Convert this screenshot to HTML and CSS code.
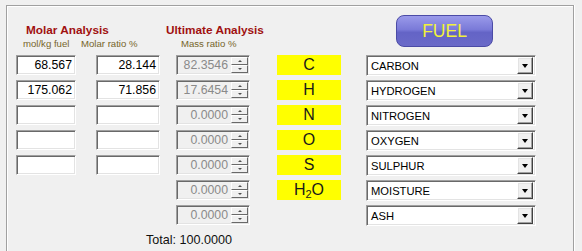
FILE: index.html
```html
<!DOCTYPE html>
<html>
<head>
<meta charset="utf-8">
<link rel="stylesheet" href="styles.css">
</head>
<body>
<div class="frame">
  <div class="header">
    <div class="title title-molar">Molar Analysis</div>
    <div class="title title-ult">Ultimate Analysis</div>
    <div class="sub sub-mol">mol/kg fuel</div>
    <div class="sub sub-ratio">Molar ratio %</div>
    <div class="sub sub-mass">Mass ratio %</div>
    <div class="fuel-btn">FUEL</div>
  </div>
  <div class="grid">
    <div class="field c1"><span>68.567</span></div>
    <div class="field c2"><span>28.144</span></div>
    <div class="field spin c3"><span>82.3546</span><div class="spinner"><i class="up"></i><i class="down"></i></div></div>
    <div class="elem c4">C</div>
    <div class="select c5"><span>CARBON</span><b class="drop"></b></div>

    <div class="field c1"><span>175.062</span></div>
    <div class="field c2"><span>71.856</span></div>
    <div class="field spin c3"><span>17.6454</span><div class="spinner"><i class="up"></i><i class="down"></i></div></div>
    <div class="elem c4">H</div>
    <div class="select c5"><span>HYDROGEN</span><b class="drop"></b></div>

    <div class="field c1"></div>
    <div class="field c2"></div>
    <div class="field spin c3"><span>0.0000</span><div class="spinner"><i class="up"></i><i class="down"></i></div></div>
    <div class="elem c4">N</div>
    <div class="select c5"><span>NITROGEN</span><b class="drop"></b></div>

    <div class="field c1"></div>
    <div class="field c2"></div>
    <div class="field spin c3"><span>0.0000</span><div class="spinner"><i class="up"></i><i class="down"></i></div></div>
    <div class="elem c4">O</div>
    <div class="select c5"><span>OXYGEN</span><b class="drop"></b></div>

    <div class="field c1"></div>
    <div class="field c2"></div>
    <div class="field spin c3"><span>0.0000</span><div class="spinner"><i class="up"></i><i class="down"></i></div></div>
    <div class="elem c4">S</div>
    <div class="select c5"><span>SULPHUR</span><b class="drop"></b></div>

    <div class="field spin c3"><span>0.0000</span><div class="spinner"><i class="up"></i><i class="down"></i></div></div>
    <div class="elem c4">H<sub>2</sub>O</div>
    <div class="select c5"><span>MOISTURE</span><b class="drop"></b></div>

    <div class="field spin c3"><span>0.0000</span><div class="spinner"><i class="up"></i><i class="down"></i></div></div>
    <div class="select c5"><span>ASH</span><b class="drop"></b></div>

    <div class="total">Total: 100.0000</div>
  </div>
</div>
</body>
</html>
```

FILE: styles.css
```css
html, body {
  margin: 0;
  padding: 0;
  background: #f0f0f0;
  font-family: "Liberation Sans", Arial, sans-serif;
  height: 251px;
  overflow: hidden;
}

.frame {
  margin: 5px 0 0 6px;
  width: 568px;
  height: 246px;
  border: 1px solid #a0a0a0;
  border-bottom: none;
  box-shadow: inset 1px 1px 0 #ffffff, 1px 0 0 #ffffff;
  padding: 0 0 0 9px;
  box-sizing: border-box;
}

.header {
  display: grid;
  grid-template-columns: 80px 80px 101px 89px 170px;
  grid-template-rows: 17px 14px 13px;
  margin-bottom: 5px;
}

.title {
  grid-row: 2;
  font-weight: bold;
  font-size: 11.8px;
  line-height: 14px;
  color: #a01010;
  white-space: nowrap;
}
.title-molar { grid-column: 1 / 3; padding-left: 10px; }
.title-ult { grid-column: 3 / 5; margin-left: -10px; }

.sub {
  grid-row: 3;
  font-size: 9.6px;
  line-height: 13px;
  color: #76652a;
  white-space: nowrap;
}
.sub-mol { grid-column: 1; padding-left: 7px; }
.sub-ratio { grid-column: 2; margin-left: -15px; }
.sub-mass { grid-column: 3; padding-left: 5px; }

.fuel-btn {
  grid-column: 5;
  grid-row: 1 / 4;
  align-self: start;
  margin: 9px 0 0 30px;
  width: 97px;
  height: 32px;
  box-sizing: border-box;
  border: 1px solid #4b4ba6;
  border-radius: 8px;
  background: linear-gradient(#9a9aea 0%, #7a7ad8 45%, #6464c6 55%, #6a6ac8 100%);
  color: #f2f23a;
  font-size: 17.5px;
  line-height: 30px;
  text-align: center;
}

.grid {
  display: grid;
  grid-template-columns: 80px 80px 101px 89px 170px;
  grid-template-rows: repeat(7, 21px) 18px;
  row-gap: 4px;
}

.c1 { grid-column: 1; width: 60px; }
.c2 { grid-column: 2; width: 64px; }
.c3 { grid-column: 3; width: 74px; }
.c4 { grid-column: 4; width: 64px; }
.c5 { grid-column: 5; width: 170px; }

.field {
  height: 20px;
  box-sizing: border-box;
  background: #ffffff;
  border: 1px solid;
  border-color: #a0a0a0 #ffffff #ffffff #a0a0a0;
  box-shadow: inset 1px 1px 0 #696969, inset -1px -1px 0 #e3e3e3;
  display: flex;
  align-items: center;
  justify-content: flex-end;
  padding-right: 3px;
  font-size: 12.3px;
  color: #000;
}

.field.spin {
  background: #f0f0f0;
  color: #8a8a8a;
  padding-right: 1px;
  justify-content: flex-end;
}
.field.spin span { margin-right: 3px; }

.spinner {
  width: 17px;
  height: 16px;
  display: flex;
  flex-direction: column;
}
.spinner i {
  flex: 1;
  position: relative;
  background: #f0f0f0;
  border-top: 1px solid #ffffff;
  border-left: 1px solid #ffffff;
  border-bottom: 1px solid #696969;
  border-right: 1px solid #696969;
}
.spinner i::after {
  content: "";
  position: absolute;
  left: 6px;
  top: 2px;
  border-left: 2px solid transparent;
  border-right: 2px solid transparent;
}
.spinner i.up::after { border-bottom: 2px solid #505050; }
.spinner i.down::after { border-top: 2px solid #505050; }

.elem {
  height: 20px;
  background: #ffff00;
  color: #1a1a1a;
  font-size: 16px;
  line-height: 20px;
  text-align: center;
}
.elem sub {
  font-size: 11px;
  vertical-align: -3px;
  line-height: 0;
}

.select {
  height: 21px;
  box-sizing: border-box;
  background: #ffffff;
  border: 1px solid;
  border-color: #a0a0a0 #ffffff #ffffff #a0a0a0;
  box-shadow: inset 1px 1px 0 #696969, inset -1px -1px 0 #e3e3e3;
  display: flex;
  align-items: center;
  justify-content: space-between;
  padding: 0 2px 0 4px;
  font-size: 11.2px;
  color: #000;
}

.drop {
  position: relative;
  width: 16px;
  height: 17px;
  box-sizing: border-box;
  background: #f0f0f0;
  border-top: 1px solid #ffffff;
  border-left: 1px solid #ffffff;
  border-bottom: 1px solid #404040;
  border-right: 1px solid #404040;
  box-shadow: inset -1px -1px 0 #a0a0a0, inset 1px 1px 0 #e3e3e3;
}
.drop::after {
  content: "";
  position: absolute;
  left: 4px;
  top: 6px;
  border-left: 3.5px solid transparent;
  border-right: 3.5px solid transparent;
  border-top: 4px solid #000;
}

.total {
  grid-column: 2 / 4;
  padding-left: 50px;
  margin-top: 2px;
  font-size: 12.6px;
  line-height: 16px;
  color: #101010;
  white-space: nowrap;
}
```
